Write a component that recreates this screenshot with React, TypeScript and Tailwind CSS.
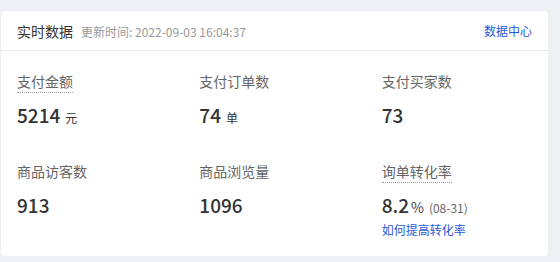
import React from 'react'

interface Metric {
  label: string
  value: string
  unit?: string
  hint?: boolean
  extra?: string
  link?: string
}

const metrics: Metric[] = [
  { label: '支付金额', value: '5214', unit: '元', hint: true },
  { label: '支付订单数', value: '74', unit: '单' },
  { label: '支付买家数', value: '73' },
  { label: '商品访客数', value: '913' },
  { label: '商品浏览量', value: '1096' },
  { label: '询单转化率', value: '8.2', unit: '%', hint: true, extra: '(08-31)', link: '如何提高转化率' },
]

const font = { fontFamily: '"Noto Sans CJK SC", "Noto Sans", sans-serif' }

function MetricCell({ m }: { m: Metric }) {
  return (
    <div className="px-4 flex flex-col items-start">
      <span
        className={`text-sm leading-[22px] text-[#666] border-b border-dotted ${
          m.hint ? 'border-[#999]' : 'border-transparent'
        }`}
      >
        {m.label}
      </span>
      <div className="mt-[8px] flex items-baseline h-[28px]">
        <span className="text-[19px] leading-[28px] font-medium text-[#333]">{m.value}</span>
        {m.unit === '%' ? (
          <span className="ml-[2px] text-[14px] text-[#444]">%</span>
        ) : m.unit ? (
          <span className="ml-[5px] text-[12px] text-[#333]">{m.unit}</span>
        ) : null}
        {m.extra && <span className="ml-[5px] text-[12px] text-[#666]">{m.extra}</span>}
      </div>
      {m.link && (
        <a href="#" className="text-[12px] leading-[20px] text-[#2759d6] mt-[1px]">
          {m.link}
        </a>
      )}
    </div>
  )
}

export default function App() {
  return (
    <div className="w-[560px] h-[262px] bg-[#eff0f4] pt-[11px] pl-[1px]" style={font}>
      <div className="w-[547px] bg-white rounded-[4px]">
        <div className="h-[40px] px-4 flex items-center justify-between border-b border-[#e8e9ed]">
          <div className="flex items-baseline">
            <span className="text-sm text-[#333]">实时数据</span>
            <span className="ml-2 text-[12px] text-[#999]">更新时间: 2022-09-03 16:04:37</span>
          </div>
          <a href="#" className="text-[12px] text-[#2759d6]">
            数据中心
          </a>
        </div>
        <div className="grid grid-cols-3 gap-y-[31px] pt-[19px] pb-[16px] items-start">
          {metrics.map((m) => (
            <MetricCell key={m.label} m={m} />
          ))}
        </div>
      </div>
    </div>
  )
}
